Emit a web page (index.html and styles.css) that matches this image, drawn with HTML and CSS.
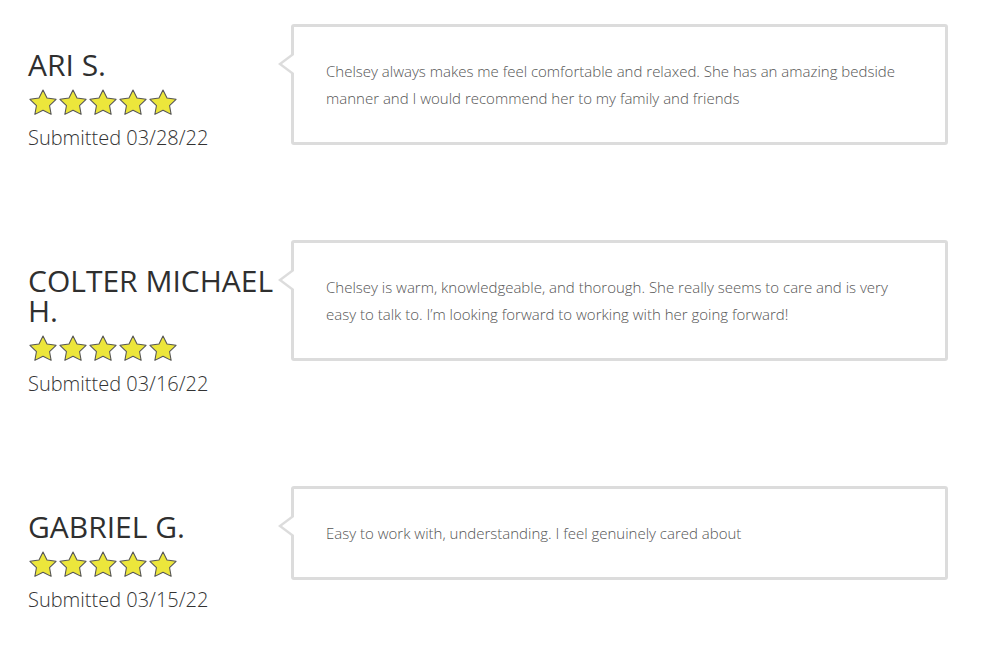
FILE: index.html
```html
<!DOCTYPE html>
<html lang="en">

<head>
    <meta charset="UTF-8">
    <meta name="viewport" content="width=device-width, initial-scale=1.0">
    <title>Reviews</title>
    <link rel="stylesheet" href="styles.css">
</head>

<body>
    <svg class="defs" width="0" height="0">
        <symbol id="star" viewBox="1.5 1.5 21 20" preserveAspectRatio="none">
            <polygon points="12,2.3 15,8.4 21.8,9.4 16.9,14.2 18.1,21 12,17.8 5.9,21 7.1,14.2 2.2,9.4 9,8.4"
                fill="#ece63b" stroke="#555" stroke-width="0.8" stroke-linejoin="round" />
        </symbol>
    </svg>

    <div class="reviews">
        <div class="review">
            <div class="reviewer">
                <div class="name">ARI S.</div>
                <div class="stars">
                    <svg class="star"><use href="#star"></use></svg>
                    <svg class="star"><use href="#star"></use></svg>
                    <svg class="star"><use href="#star"></use></svg>
                    <svg class="star"><use href="#star"></use></svg>
                    <svg class="star"><use href="#star"></use></svg>
                </div>
                <div class="date">Submitted 03/28/22</div>
            </div>
            <div class="bubble">
                <p>Chelsey always makes me feel comfortable and relaxed. She has an amazing bedside manner and I would recommend her to my family and friends</p>
            </div>
        </div>

        <div class="review">
            <div class="reviewer">
                <div class="name">COLTER MICHAEL H.</div>
                <div class="stars">
                    <svg class="star"><use href="#star"></use></svg>
                    <svg class="star"><use href="#star"></use></svg>
                    <svg class="star"><use href="#star"></use></svg>
                    <svg class="star"><use href="#star"></use></svg>
                    <svg class="star"><use href="#star"></use></svg>
                </div>
                <div class="date">Submitted 03/16/22</div>
            </div>
            <div class="bubble">
                <p>Chelsey is warm, knowledgeable, and thorough. She really seems to care and is very easy to talk to. I’m looking forward to working with her going forward!</p>
            </div>
        </div>

        <div class="review">
            <div class="reviewer">
                <div class="name">GABRIEL G.</div>
                <div class="stars">
                    <svg class="star"><use href="#star"></use></svg>
                    <svg class="star"><use href="#star"></use></svg>
                    <svg class="star"><use href="#star"></use></svg>
                    <svg class="star"><use href="#star"></use></svg>
                    <svg class="star"><use href="#star"></use></svg>
                </div>
                <div class="date">Submitted 03/15/22</div>
            </div>
            <div class="bubble">
                <p>Easy to work with, understanding. I feel genuinely cared about</p>
            </div>
        </div>
    </div>
</body>

</html>
```

FILE: styles.css
```css
body {
    margin: 0;
    background: #fff;
    font-family: "Open Sans", "Liberation Sans", sans-serif;
    color: #333;
}

.defs {
    position: absolute;
    width: 0;
    height: 0;
}

.reviews {
    padding: 24px 0 0 28px;
}

.review {
    display: flex;
    align-items: flex-start;
    margin-bottom: 89px;
}

.reviewer {
    width: 263px;
    flex: none;
    padding-top: 26px;
}

.name {
    font-size: 30px;
    line-height: 30px;
    font-weight: 400;
    color: #2f2f2f;
}

.stars {
    display: flex;
    gap: 2px;
    height: 44px;
    padding-left: 1px;
    padding-top: 9px;
    box-sizing: border-box;
}

.star {
    width: 28px;
    height: 26px;
}

.date {
    font-size: 20px;
    font-weight: 300;
    line-height: 27px;
    color: #333;
}

.bubble {
    position: relative;
    width: 657px;
    border: 3px solid #dcdcdc;
    border-radius: 3px;
    padding: 31px 32px 30px;
    box-sizing: border-box;
}

.bubble::before {
    content: "";
    position: absolute;
    left: -16px;
    top: 25px;
    border-right: 16px solid #dcdcdc;
    border-top: 12px solid transparent;
    border-bottom: 12px solid transparent;
}

.bubble::after {
    content: "";
    position: absolute;
    left: -12px;
    top: 28px;
    border-right: 12px solid #fff;
    border-top: 9px solid transparent;
    border-bottom: 9px solid transparent;
}

.bubble p {
    margin: 0;
    font-size: 15px;
    font-weight: 300;
    line-height: 27px;
    color: #555;
}
```
